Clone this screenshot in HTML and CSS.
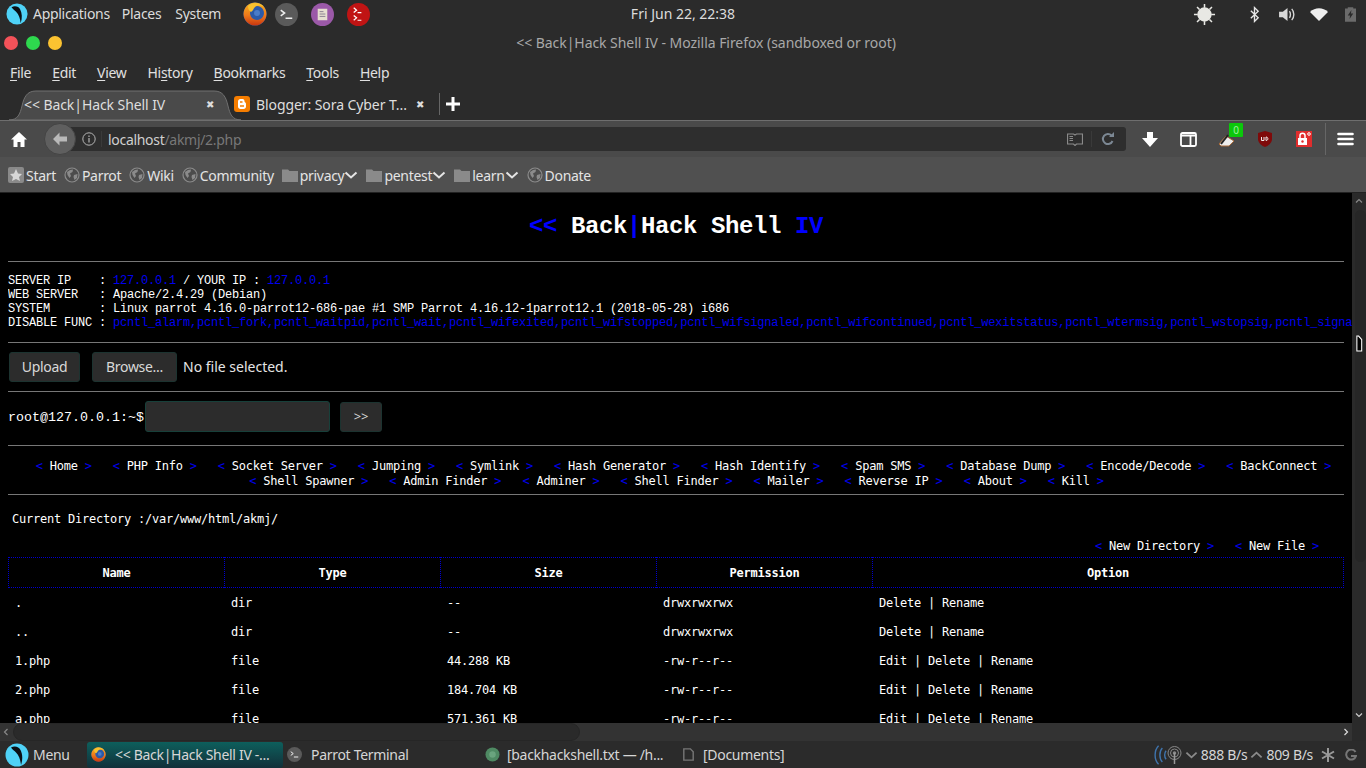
FILE: index.html
```html
<!DOCTYPE html>
<html>
<head>
    <title>Back|Hack Shell IV</title>
    <link rel="stylesheet" href="styles.css">
</head>
<body>
    <svg class="defs" width="0" height="0">
        <defs>
            <linearGradient id="fox" x1="0" y1="0" x2="0" y2="1">
                <stop offset="0" stop-color="#f7b21e"/>
                <stop offset="0.55" stop-color="#ef7a1a"/>
                <stop offset="1" stop-color="#c9360f"/>
            </linearGradient>
        </defs>
        <symbol id="parrot" viewBox="0 0 24 24">
            <circle cx="12" cy="12" r="11.5" fill="#4fd2f7"/>
            <path d="M6 4.500C10 2.500 14 4 15.500 7C17.500 11 18 16 16 22C15.500 17 14 12.500 11 9.500C9.500 8 7.500 6.500 6 4.500Z" fill="#0b0f14"/>
        </symbol>
        <symbol id="firefox" viewBox="0 0 24 24">
            <circle cx="12" cy="12" r="11.500" fill="#2c5aa8"/>
            <path fill-rule="evenodd" d="M12 .5a11.500 11.500 0 1 0 .01 0ZM14 4a7 7 0 1 1 -.01 0Z" fill="url(#fox)"/>
            <path d="M5 4C9 0 17 0 21 5C18 3 14 3 12 5C10 7 10 9 8 10C6 9 5 7 5 4Z" fill="#f9c22e"/>
            <circle cx="14" cy="11" r="3" fill="#4a7cc8"/>
        </symbol>
        <symbol id="term" viewBox="0 0 24 24">
            <circle cx="12" cy="12" r="12" fill="#5a5a5a"/>
            <path d="M6 7.500L10 10.500L6 13.500M11 16H18" fill="none" stroke="#eee" stroke-width="1.600"/>
        </symbol>
        <symbol id="globe" viewBox="0 0 16 16">
            <circle cx="8" cy="8" r="7" fill="#4c4c4c" stroke="#8b8b8b" stroke-width="1.200"/>
            <path d="M3 5L6 3L9 2.500L8.500 5L6 6.500L7 9L5.500 11L3.500 8ZM10 8L13.500 7L13 11L10.500 13L9.500 10Z" fill="#8b8b8b"/>
        </symbol>
        <symbol id="folder" viewBox="0 0 16 14">
            <path d="M0 1.500H6L7.500 3H16V14H0Z" fill="#8a8a8a"/>
        </symbol>
        <symbol id="chev" viewBox="0 0 14 8">
            <path d="M1.500 1.500L7 6.500L12.500 1.500" fill="none" stroke="currentColor" stroke-width="2"/>
        </symbol>
    </svg>

    <div class="panel">
        <div class="panel-left">
            <svg class="ico-parrot"><use href="#parrot"/></svg>
            <span class="panel-item apps">Applications</span>
            <span class="panel-item places">Places</span>
            <span class="panel-item system">System</span>
            <svg class="launch launch-ff"><use href="#firefox"/></svg>
            <svg class="launch launch-term"><use href="#term"/></svg>
            <svg class="launch launch-note" viewBox="0 0 24 24">
                <circle cx="12" cy="12" r="12" fill="#9b59a8"/>
                <path d="M7 6H17V18H7Z" fill="#e6dfd0"/>
                <path d="M9 9H13M9 11.500H15M9 14H15" stroke="#8a7f90" stroke-width="1"/>
            </svg>
            <svg class="launch launch-red" viewBox="0 0 24 24">
                <circle cx="12" cy="12" r="12" fill="#c01414"/>
                <path d="M7 5L10 7.500L7 10M11 10H15M7 13L10 15.500L7 18M11 18H15" fill="none" stroke="#fff" stroke-width="1.300"/>
            </svg>
        </div>
        <div class="clock">Fri Jun 22, 22:38</div>
        <div class="panel-right">
            <svg class="tray tray-sun" viewBox="0 0 24 24">
                <circle cx="12" cy="12" r="7.500" fill="#e8e8e4"/>
                <path d="M12 1V5M12 19V23M1 12H5M19 12H23M4.200 4.200L6.800 6.800M17.200 17.200L19.800 19.800M4.200 19.800L6.800 17.200M17.200 6.800L19.800 4.200" stroke="#e8e8e4" stroke-width="1.600"/>
            </svg>
            <svg class="tray tray-bt" viewBox="0 0 12 18">
                <path d="M2 5L10 12.500L6 16.500V1.500L10 5.500L2 13" fill="none" stroke="#e6e6e6" stroke-width="1.500"/>
            </svg>
            <svg class="tray tray-vol" viewBox="0 0 18 16">
                <path d="M0 5H4L9 1V15L4 11H0Z" fill="#d8d8d8"/>
                <path d="M11 4.500C12.500 6 12.500 10 11 11.500M13.500 2C16.500 5 16.500 11 13.500 14" fill="none" stroke="#d8d8d8" stroke-width="1.500"/>
            </svg>
            <svg class="tray tray-wifi" viewBox="0 0 18 13">
                <path d="M0 4C5 -1 13 -1 18 4L9 13Z" fill="#efefef"/>
            </svg>
            <svg class="tray tray-bat" viewBox="0 0 12 16">
                <path d="M3 0H9V1.500H12V16H0V1.500H3Z" fill="#6b6b6b"/>
                <path d="M7 3L3 9H5.500L5 13L9 7H6.500Z" fill="#2b2b2b"/>
            </svg>
        </div>
    </div>

    <div class="titlebar">
        <div class="lights">
            <span class="light light-red"></span>
            <span class="light light-green"></span>
            <span class="light light-yellow"></span>
        </div>
        <div class="title">&lt;&lt; Back|Hack Shell IV - Mozilla Firefox (sandboxed or root)</div>
    </div>

    <div class="menubar">
        <span class="menu"><u>F</u>ile</span>
        <span class="menu"><u>E</u>dit</span>
        <span class="menu"><u>V</u>iew</span>
        <span class="menu">Hi<u>s</u>tory</span>
        <span class="menu"><u>B</u>ookmarks</span>
        <span class="menu"><u>T</u>ools</span>
        <span class="menu"><u>H</u>elp</span>
    </div>

    <div class="tabbar">
        <div class="tab tab-active">
            <svg class="tab-shape" viewBox="0 0 232 30" preserveAspectRatio="none">
                <path d="M0 30C9 30 11 24 13 16C15 7 18 1 27 1H205C214 1 217 7 219 16C221 24 223 30 232 30Z" fill="#4a4a4a" stroke="#707070"/>
            </svg>
            <span class="tab-text">&lt;&lt; Back|Hack Shell IV</span>
            <span class="tab-x">✖</span>
        </div>
        <div class="tab tab-other">
            <svg class="tab-fav" viewBox="0 0 16 16">
                <rect width="16" height="16" rx="3" fill="#f57d00"/>
                <path d="M4 5.500C4 4 5 3 6.500 3H8.500C10 3 10.500 4 10.500 5.500C10.500 6.500 12 6.500 12 8V10.500C12 12 11 13 9.500 13H6.500C5 13 4 12 4 10.500Z" fill="#fff"/>
                <path d="M6 6H8.500M6 10H10" stroke="#f57d00" stroke-width="1.300"/>
            </svg>
            <span class="tab-text">Blogger: Sora Cyber T...</span>
            <span class="tab-x">✖</span>
        </div>
        <span class="tab-sep"></span>
        <svg class="tab-new" viewBox="0 0 14 14"><path d="M7 0V14M0 7H14" stroke="#fff" stroke-width="3"/></svg>
    </div>

    <div class="navbar">
        <svg class="nav-home" viewBox="0 0 16 15">
            <path d="M8 0L16 7.500H13.500V15H9.500V10H6.500V15H2.500V7.500H0Z" fill="#fff"/>
        </svg>
        <div class="urlbar">
            <div class="back-btn">
                <svg viewBox="0 0 16 14" width="16" height="14"><path d="M7.500 0.500L1 7L7.500 13.500V9.500H15V4.500H7.500Z" fill="#b9b9b9"/></svg>
            </div>
            <svg class="url-info" viewBox="0 0 14 14">
                <circle cx="7" cy="7" r="6.200" fill="none" stroke="#b5b5b5" stroke-width="1"/>
                <path d="M7 6V10.500M7 3.500V5" stroke="#b5b5b5" stroke-width="1.200"/>
            </svg>
            <span class="url-line"></span>
            <span class="url-text">localhost<span class="url-path">/akmj/2.php</span></span>
            <svg class="url-read" viewBox="0 0 16 13">
                <path d="M0.500 1H6.500L8 2L9.500 1H15.500V11H9.500L8 12.500L6.500 11H0.500Z" fill="none" stroke="#8a8a8a" stroke-width="1.200"/>
                <path d="M2.500 3.500H6M2.500 5.500H6M2.500 7.500H6" stroke="#8a8a8a"/>
            </svg>
            <span class="url-line2"></span>
            <svg class="url-reload" viewBox="0 0 14 14">
                <path d="M11.500 9A5 5 0 1 1 10.500 3.500" fill="none" stroke="#7c8894" stroke-width="2"/>
                <path d="M8 5H13V0Z" fill="#7c8894"/>
            </svg>
        </div>
        <div class="nav-tools">
            <svg class="tool-down" viewBox="0 0 16 15"><path d="M5 0H11V6H16L8 15L0 6H5Z" fill="#fff"/></svg>
            <svg class="tool-side" viewBox="0 0 17 15">
                <rect x="1" y="1" width="15" height="13" rx="1.500" fill="none" stroke="#fff" stroke-width="1.800"/>
                <path d="M1 3.500H16M10.500 3.500V14" stroke="#fff" stroke-width="1.800"/>
            </svg>
            <div class="tool-pen">
                <svg viewBox="0 0 18 14" width="18" height="14">
                    <path d="M1 11L8 3L16 8L11 13H3Z" fill="#eee" stroke="#a86a3a"/>
                    <path d="M3 11L10 2" stroke="#222" stroke-width="2"/>
                </svg>
                <span class="pen-badge">0</span>
            </div>
            <svg class="tool-ub" viewBox="0 0 14 16">
                <path d="M7 0L14 2V8C14 12 10 15 7 16C4 15 0 12 0 8V2Z" fill="#7f0a0a"/>
                <path d="M3.500 6V9.500H6V6M8 6V9.500C10.500 9.500 10.500 6 8 6Z" fill="none" stroke="#eee"/>
            </svg>
            <svg class="tool-lock" viewBox="0 0 16 16">
                <rect width="16" height="16" fill="#e02d2d"/>
                <rect x="2" y="7" width="9" height="7" fill="#fff"/>
                <path d="M4 7V4.500C4 1.500 9 1.500 9 4.500V7" fill="none" stroke="#fff" stroke-width="1.500"/>
                <circle cx="13" cy="3" r="1.300" fill="none" stroke="#fff"/>
                <circle cx="6.500" cy="10.500" r="1.200" fill="#e02d2d"/>
            </svg>
            <span class="tool-sep"></span>
            <svg class="tool-menu" viewBox="0 0 17 14"><path d="M1.500 2H15.500M1.500 7H15.500M1.500 12H15.500" stroke="#fff" stroke-width="2.600" stroke-linecap="round"/></svg>
        </div>
    </div>

    <div class="bookmarks">
        <svg class="bm-start" viewBox="0 0 16 16">
            <rect width="16" height="16" rx="2" fill="#8a8a8a"/>
            <path d="M8 2L10 6.500L14 7L11 10L12 14L8 12L4 14L5 10L2 7L6 6.500Z" fill="#d8d8d8"/>
        </svg>
        <span class="bm-label">Start</span>
        <svg class="bm-globe"><use href="#globe"/></svg>
        <span class="bm-label">Parrot</span>
        <svg class="bm-globe"><use href="#globe"/></svg>
        <span class="bm-label">Wiki</span>
        <svg class="bm-globe"><use href="#globe"/></svg>
        <span class="bm-label">Community</span>
        <svg class="bm-folder"><use href="#folder"/></svg>
        <span class="bm-label">privacy</span>
        <svg class="bm-chev"><use href="#chev"/></svg>
        <svg class="bm-folder"><use href="#folder"/></svg>
        <span class="bm-label">pentest</span>
        <svg class="bm-chev"><use href="#chev"/></svg>
        <svg class="bm-folder"><use href="#folder"/></svg>
        <span class="bm-label">learn</span>
        <svg class="bm-chev"><use href="#chev"/></svg>
        <svg class="bm-globe"><use href="#globe"/></svg>
        <span class="bm-label">Donate</span>
    </div>

    <div class="viewport">
        <div class="page">
            <h1 class="shell-title"><span class="blue">&lt;&lt;</span> Back<span class="blue">|</span>Hack Shell <span class="blue">IV</span></h1>
            <hr>
            <pre class="info">SERVER IP    : <span class="blue">127.0.0.1</span> / YOUR IP : <span class="blue">127.0.0.1</span>
WEB SERVER   : Apache/2.4.29 (Debian)
SYSTEM       : Linux parrot 4.16.0-parrot12-686-pae #1 SMP Parrot 4.16.12-1parrot12.1 (2018-05-28) i686
DISABLE FUNC : <span class="blue">pcntl_alarm,pcntl_fork,pcntl_waitpid,pcntl_wait,pcntl_wifexited,pcntl_wifstopped,pcntl_wifsignaled,pcntl_wifcontinued,pcntl_wexitstatus,pcntl_wtermsig,pcntl_wstopsig,pcntl_signal,pcntl_signal_dispatch</span></pre>
            <hr>
            <div class="upload-row">
                <button class="btn btn-upload">Upload</button>
                <button class="btn btn-browse">Browse...</button>
                <span class="no-file">No file selected.</span>
            </div>
            <hr>
            <div class="cmd-row">
                <span class="prompt">root@127.0.0.1:~$</span>
                <input class="cmd-input" type="text">
                <button class="btn btn-go">&gt;&gt;</button>
            </div>
            <hr>
            <div class="links">
                &nbsp;&nbsp;<a><b>&lt;</b> Home <b>&gt;</b></a> &nbsp;&nbsp;<a><b>&lt;</b> PHP Info <b>&gt;</b></a> &nbsp;&nbsp;<a><b>&lt;</b> Socket Server <b>&gt;</b></a> &nbsp;&nbsp;<a><b>&lt;</b> Jumping <b>&gt;</b></a> &nbsp;&nbsp;<a><b>&lt;</b> Symlink <b>&gt;</b></a> &nbsp;&nbsp;<a><b>&lt;</b> Hash Generator <b>&gt;</b></a> &nbsp;&nbsp;<a><b>&lt;</b> Hash Identify <b>&gt;</b></a> &nbsp;&nbsp;<a><b>&lt;</b> Spam SMS <b>&gt;</b></a> &nbsp;&nbsp;<a><b>&lt;</b> Database Dump <b>&gt;</b></a> &nbsp;&nbsp;<a><b>&lt;</b> Encode/Decode <b>&gt;</b></a> &nbsp;&nbsp;<a><b>&lt;</b> BackConnect <b>&gt;</b></a><br>
                <a><b>&lt;</b> Shell Spawner <b>&gt;</b></a> &nbsp;&nbsp;<a><b>&lt;</b> Admin Finder <b>&gt;</b></a> &nbsp;&nbsp;<a><b>&lt;</b> Adminer <b>&gt;</b></a> &nbsp;&nbsp;<a><b>&lt;</b> Shell Finder <b>&gt;</b></a> &nbsp;&nbsp;<a><b>&lt;</b> Mailer <b>&gt;</b></a> &nbsp;&nbsp;<a><b>&lt;</b> Reverse IP <b>&gt;</b></a> &nbsp;&nbsp;<a><b>&lt;</b> About <b>&gt;</b></a> &nbsp;&nbsp;<a><b>&lt;</b> Kill <b>&gt;</b></a>
            </div>
            <hr>
            <div class="curdir">Current Directory :/var/www/html/akmj/</div>
            <div class="new-links"><a><b>&lt;</b> New Directory <b>&gt;</b></a> &nbsp;&nbsp;<a><b>&lt;</b> New File <b>&gt;</b></a></div>
            <table class="files">
                <thead>
                    <tr><th>Name</th><th>Type</th><th>Size</th><th>Permission</th><th>Option</th></tr>
                </thead>
                <tbody>
                    <tr><td>.</td><td>dir</td><td>--</td><td>drwxrwxrwx</td><td>Delete | Rename</td></tr>
                    <tr><td>..</td><td>dir</td><td>--</td><td>drwxrwxrwx</td><td>Delete | Rename</td></tr>
                    <tr><td>1.php</td><td>file</td><td>44.288 KB</td><td>-rw-r--r--</td><td>Edit | Delete | Rename</td></tr>
                    <tr><td>2.php</td><td>file</td><td>184.704 KB</td><td>-rw-r--r--</td><td>Edit | Delete | Rename</td></tr>
                    <tr><td>a.php</td><td>file</td><td>571.361 KB</td><td>-rw-r--r--</td><td>Edit | Delete | Rename</td></tr>
                </tbody>
            </table>
        </div>
        <div class="vscroll">
            <svg class="sb-arrow" viewBox="0 0 8 6"><path d="M1 4.500L4 1.500L7 4.500" fill="none" stroke="#888" stroke-width="1.200"/></svg>
            <div class="vthumb"></div>
            <svg class="sb-arrow sb-down" viewBox="0 0 8 6"><path d="M1 1.500L4 4.500L7 1.500" fill="none" stroke="#ccc" stroke-width="1.200"/></svg>
        </div>
        <div class="hscroll">
            <svg class="sb-h" viewBox="0 0 6 8"><path d="M4.500 1L1.500 4L4.500 7" fill="none" stroke="#888" stroke-width="1.200"/></svg>
            <div class="hthumb"></div>
            <svg class="sb-h" viewBox="0 0 6 8"><path d="M1.500 1L4.500 4L1.500 7" fill="none" stroke="#ddd" stroke-width="1.200"/></svg>
        </div>
        <svg class="cursor" viewBox="0 0 8 19"><path d="M1 1H3L6.500 5V18H1Z" fill="#000" stroke="#fff" stroke-width="1.200"/></svg>
    </div>

    <div class="taskbar">
        <svg class="task-logo"><use href="#parrot"/></svg>
        <span class="task-menu">Menu</span>
        <div class="task-item task-active">
            <svg class="task-ico"><use href="#firefox"/></svg>
            <span>&lt;&lt; Back|Hack Shell IV -...</span>
        </div>
        <div class="task-item task-term">
            <svg class="task-ico"><use href="#term"/></svg>
            <span>Parrot Terminal</span>
        </div>
        <div class="task-item task-txt">
            <svg class="task-ico" viewBox="0 0 16 16"><circle cx="8" cy="8" r="7.500" fill="#4f8a63"/><circle cx="8" cy="8" r="3.500" fill="#6aa47e"/></svg>
            <span>[backhackshell.txt — /h...</span>
        </div>
        <div class="task-item task-doc">
            <svg class="task-ico" viewBox="0 0 16 16"><path d="M3 2H10L13 5V14H3Z" fill="none" stroke="#777" stroke-width="1.500"/></svg>
            <span>[Documents]</span>
        </div>
        <div class="net">
            <svg class="net-waves" viewBox="0 0 15 22"><path d="M6 1C1 6 1 16 6 21M10 3.500C6.500 7 6.500 15 10 18.500M14 6.500C12 9 12 13 14 15.500" fill="none" stroke="#3f74ad" stroke-width="1.500"/></svg>
            <svg class="net-ant" viewBox="0 0 15 18">
                <circle cx="7.500" cy="7" r="6.500" fill="none" stroke="#888"/>
                <circle cx="7.500" cy="7" r="4" fill="none" stroke="#888"/>
                <circle cx="7.500" cy="7" r="1.800" fill="#888"/>
                <path d="M7.500 7V18" stroke="#999" stroke-width="1.500"/>
            </svg>
            <svg class="net-chev"><use href="#chev"/></svg>
            <span class="net-val">888 B/s</span>
            <svg class="net-chev net-up"><use href="#chev"/></svg>
            <span class="net-val">809 B/s</span>
            <svg class="net-star" viewBox="0 0 14 14"><path d="M7 0V14M1 3.500L13 10.500M13 3.500L1 10.500" stroke="#999" stroke-width="2"/></svg>
            <svg class="net-g" viewBox="0 0 12 12"><path d="M10.500 3A5 5 0 1 0 11 7H6" fill="none" stroke="#777" stroke-width="2"/></svg>
        </div>
    </div>
</body>
</html>
```

FILE: styles.css
```css
html, body {
    margin: 0;
    padding: 0;
    height: 100%;
    overflow: hidden;
}

body {
    display: flex;
    flex-direction: column;
    background: #2b2b2b;
    color: #e4e4e4;
    font-family: "Noto Sans", sans-serif;
    font-size: 14px;
    letter-spacing: -0.3px;
}

.defs {
    position: absolute;
}

/* top gnome panel */
.panel {
    height: 28px;
    flex: none;
    display: flex;
    align-items: center;
    justify-content: space-between;
    background: #2b2b2b;
    color: #dcdcdc;
}

.panel-left {
    display: flex;
    align-items: center;
    width: 500px;
}

.panel-item { padding-bottom: 2px; }

.ico-parrot {
    width: 22px;
    height: 22px;
    margin-left: 6px;
}

.apps { margin-left: 5px; }
.places { margin-left: 12px; }
.system { margin-left: 14px; }

.launch {
    width: 23px;
    height: 23px;
    flex: none;
}

.launch-ff { margin-left: 22px; width: 24px; height: 24px; }
.launch-term { margin-left: 8px; }
.launch-note { margin-left: 13px; }
.launch-red { margin-left: 13px; }

.clock {
    position: absolute;
    left: 0;
    width: 1366px;
    text-align: center;
    pointer-events: none;
    letter-spacing: 0;
    padding-bottom: 2px;
}

.panel-right {
    display: flex;
    align-items: center;
}

.tray { flex: none; }
.tray-sun { width: 23px; height: 23px; margin-right: 33px; }
.tray-bt { width: 11px; height: 17px; margin-right: 19px; }
.tray-vol { width: 17px; height: 15px; margin-right: 14px; }
.tray-wifi { width: 18px; height: 13px; margin-right: 17px; }
.tray-bat { width: 11px; height: 15px; margin-right: 10px; }

/* window title */
.titlebar {
    height: 30px;
    flex: none;
    display: flex;
    align-items: center;
}

.lights {
    display: flex;
    gap: 8px;
    padding-left: 4px;
    margin-right: -16px;
    box-sizing: border-box;
    width: 62px;
}

.light {
    width: 14px;
    height: 14px;
    border-radius: 50%;
}

.light-red { background: #f45259; }
.light-green { background: #2ed84e; }
.light-yellow { background: #fcc331; }

.title {
    flex: 1;
    text-align: center;
    color: #a8a8a8;
    letter-spacing: -0.05px;
    padding-bottom: 2px;
}

/* menu bar */
.menubar {
    height: 30px;
    flex: none;
    display: flex;
    align-items: center;
    gap: 21px;
    padding-left: 10px;
    padding-bottom: 2px;
    box-sizing: border-box;
    color: #e0e0e0;
}

.menu u { text-underline-offset: 2px; }

/* tabs */
.tabbar {
    height: 32px;
    flex: none;
    display: flex;
    align-items: center;
    background: #2b2b2b;
    padding-left: 9px;
    box-sizing: border-box;
}

.tab {
    position: relative;
    height: 32px;
    display: flex;
    align-items: center;
    color: #dedede;
}

.tab-active {
    width: 223px;
    padding-left: 15px;
    box-sizing: border-box;
}

.tab-shape {
    position: absolute;
    left: 0;
    top: 2px;
    width: 232px;
    height: 30px;
}

.tab-text {
    position: relative;
    padding-top: 1px;
    letter-spacing: -0.08px;
}

.tab-x {
    position: absolute;
    font-size: 10px;
    color: #ddd;
}

.tab-active .tab-x { left: 197px; }

.tab-other {
    width: 206px;
    padding-left: 2px;
    box-sizing: border-box;
}

.tab-other .tab-x { left: 184px; }

.tab-fav {
    width: 16px;
    height: 16px;
    margin-right: 6px;
    flex: none;
}

.tab-sep {
    width: 1px;
    height: 22px;
    background: #666;
    margin-left: 1px;
}

.tab-new {
    width: 14px;
    height: 14px;
    margin-left: 6px;
}

/* nav toolbar */
.navbar {
    height: 37px;
    flex: none;
    display: flex;
    align-items: center;
    background: #4a4a4a;
    border-top: 1px solid #6e6e6e;
    box-sizing: border-box;
}

.nav-home {
    width: 16px;
    height: 15px;
    margin-left: 11px;
    flex: none;
}

.urlbar {
    width: 1066px;
    height: 24px;
    margin-left: 33px;
    flex: none;
    display: flex;
    align-items: center;
    position: relative;
    background: #2e2e2e;
    border-radius: 3px;
}

.back-btn {
    position: absolute;
    left: -16px;
    top: -4px;
    width: 30px;
    height: 30px;
    border-radius: 50%;
    background: #5f5f5f;
    border: 1px solid #444;
    display: flex;
    align-items: center;
    justify-content: center;
}

.url-info {
    width: 14px;
    height: 14px;
    margin-left: 22px;
    flex: none;
}

.url-line {
    width: 1px;
    height: 16px;
    background: #3a3a3a;
    margin-left: 5px;
}

.url-text {
    margin-left: 6px;
    flex: 1;
    color: #d0d0d0;
}

.url-path { color: #787878; }

.url-read {
    width: 16px;
    height: 13px;
    flex: none;
}

.url-line2 {
    width: 1px;
    height: 16px;
    background: #3a3a3a;
    margin-left: 8px;
}

.url-reload {
    width: 14px;
    height: 14px;
    margin-left: 9px;
    margin-right: 11px;
    flex: none;
}

.nav-tools {
    display: flex;
    align-items: center;
    margin-left: 16px;
}

.tool-down { width: 16px; height: 15px; }
.tool-side { width: 17px; height: 15px; margin-left: 22px; }

.tool-pen {
    position: relative;
    width: 18px;
    height: 14px;
    margin-left: 21px;
}

.pen-badge {
    position: absolute;
    left: 11px;
    top: -9px;
    width: 14px;
    height: 14px;
    background: #0bc80b;
    border-radius: 1px;
    color: #9ff09f;
    font-size: 10px;
    line-height: 14px;
    text-align: center;
}

.tool-ub { width: 14px; height: 16px; margin-left: 22px; }
.tool-lock { width: 16px; height: 16px; margin-left: 24px; }

.tool-sep {
    width: 1px;
    height: 32px;
    background: #666;
    margin-left: 13px;
}

.tool-menu { width: 17px; height: 14px; margin-left: 11px; }

/* bookmarks toolbar */
.bookmarks {
    height: 36px;
    flex: none;
    display: flex;
    align-items: center;
    background: #505050;
    border-bottom: 1px solid #222;
    box-sizing: border-box;
    padding-left: 8px;
    padding-top: 1px;
    color: #e4e4e4;
}

.bm-start { width: 16px; height: 16px; flex: none; }
.bm-globe { width: 16px; height: 16px; flex: none; margin-left: 8px; }
.bm-folder { width: 16px; height: 14px; flex: none; margin-left: 8px; }
.bm-label { margin-left: 2px; }
.bm-chev { width: 14px; height: 8px; color: #e4e4e4; flex: none; }

/* browser content */
.viewport {
    flex: 1;
    min-height: 0;
    position: relative;
    display: grid;
    grid-template-columns: 1352px 14px;
    grid-template-rows: 530px 18px;
    background: #000;
}

.page {
    overflow: hidden;
    padding: 0 8px;
    color: #fff;
    font-family: "DejaVu Sans Mono", monospace;
    font-size: 12px;
    letter-spacing: -0.224px;
}

.page hr {
    border: none;
    height: 1px;
    background: #777;
    margin: 0;
    width: 1336px;
}

.blue { color: #0000ee; }

.shell-title {
    height: 68px;
    margin: 0;
    text-align: center;
    font-family: "Liberation Mono", monospace;
    font-size: 24px;
    letter-spacing: -0.4px;
    line-height: 67px;
}

.shell-title .blue { color: #00f; }

.info {
    margin: 12px 0 12px;
    font-family: "Liberation Mono", monospace;
    font-size: 12px;
    letter-spacing: -0.2px;
    line-height: 14px;
    width: 1400px;
    overflow: hidden;
}

.upload-row {
    display: flex;
    align-items: center;
    height: 30px;
    padding: 9px 0 9px 1px;
}

.btn {
    background: #2c2c2c;
    border: 1px solid #1c3330;
    border-radius: 3px;
    color: #d8d8d8;
    font-family: "Noto Sans", sans-serif;
    font-size: 14px;
    letter-spacing: -0.3px;
    padding: 0 0 2px;
    height: 30px;
    box-sizing: border-box;
}

.btn-upload { width: 71px; }
.btn-browse { width: 85px; margin-left: 12px; }

.no-file {
    margin-left: 6px;
    padding-bottom: 2px;
    font-family: "Noto Sans", sans-serif;
    font-size: 14px;
    letter-spacing: 0;
    color: #e4e4e4;
}

.cmd-row {
    display: flex;
    align-items: center;
    height: 31px;
    padding: 9px 0 13px;
}

.prompt {
    width: 137px;
    flex: none;
    padding-top: 2px;
    font-family: "Liberation Mono", monospace;
    font-size: 13.33px;
    letter-spacing: 0;
}

.cmd-input {
    width: 185px;
    height: 31px;
    box-sizing: border-box;
    background: #2c2c2c;
    border: 1px solid #17403a;
    border-radius: 3px;
    padding: 0;
    flex: none;
}

.btn-go {
    width: 42px;
    margin-left: 10px;
    font-size: 13px;
}

.links {
    padding: 13px 0 5px 1px;
    text-align: center;
    line-height: 15px;
    width: 1335px;
}

.links b, .new-links b {
    font-weight: normal;
    color: #0000ee;
}

.curdir {
    padding: 17px 0 0 4px;
    line-height: 15px;
}

.new-links {
    text-align: right;
    padding: 12px 25px 0 0;
    line-height: 15px;
    width: 1311px;
    height: 15px;
}

.files {
    margin-top: 3px;
    border-collapse: separate;
    border-spacing: 0;
    table-layout: fixed;
    width: 1336px;
}

.files th {
    width: 216px;
    height: 31px;
    padding: 0;
    border-top: 1px dotted #0000cc;
    border-bottom: 1px dotted #0000cc;
    border-left: 1px dotted #0000cc;
    box-sizing: border-box;
}

.files th:last-child {
    width: auto;
    border-right: 1px dotted #0000cc;
}

.files td {
    height: 29px;
    padding: 0 7px;
}

/* scrollbars */
.vscroll {
    grid-row: 1 / 3;
    grid-column: 2;
    background: #2a2a2a;
    display: flex;
    flex-direction: column;
    align-items: center;
    position: relative;
    padding-top: 5px;
    box-sizing: border-box;
}

.sb-arrow {
    width: 8px;
    height: 6px;
    flex: none;
}

.vthumb {
    width: 11px;
    height: 352px;
    margin-top: 6px;
    margin-left: 3px;
    background: #262626;
    border-radius: 6px;
}

.sb-down {
    margin-top: 150px;
}

.hscroll {
    grid-row: 2;
    grid-column: 1;
    background: #333;
    display: flex;
    align-items: center;
    justify-content: space-between;
    padding: 0 3px;
    position: relative;
}

.sb-h {
    width: 6px;
    height: 8px;
    flex: none;
}

.hthumb {
    position: absolute;
    left: 13px;
    top: 0;
    width: 567px;
    height: 18px;
    background: #2a2a2a;
    border-radius: 9px;
    border: 1px solid #262626;
    box-sizing: border-box;
}

.cursor {
    position: absolute;
    left: 1356px;
    top: 141px;
    width: 7px;
    height: 19px;
}

/* bottom panel */
.taskbar {
    height: 27px;
    flex: none;
    display: flex;
    align-items: center;
    background: #2b2b2b;
    color: #d6d6d6;
    position: relative;
}

.task-logo {
    width: 24px;
    height: 24px;
    margin-left: 5px;
    flex: none;
}

.task-menu {
    margin-left: 4px;
    width: 54px;
}

.task-item {
    height: 26px;
    display: flex;
    align-items: center;
    box-sizing: border-box;
    white-space: nowrap;
}

.task-ico {
    width: 15px;
    height: 15px;
    flex: none;
}

.task-active {
    width: 196px;
    background: linear-gradient(#0d5f5c, #12303a);
    border-radius: 3px;
    margin-right: 4px;
}

.task-active .task-ico { margin: 0 9px 0 4px; }

.task-term {
    width: 196px;
}

.task-term .task-ico { margin-right: 9px; }

.task-txt {
    width: 196px;
    margin-left: 2px;
}

.task-txt .task-ico { margin-right: 7px; }

.task-doc .task-ico { margin-right: 7px; }

.net {
    position: absolute;
    right: 9px;
    top: 0;
    height: 27px;
    display: flex;
    align-items: center;
}

.net-waves { width: 14px; height: 22px; }
.net-ant { width: 15px; height: 18px; }
.net-chev { width: 13px; height: 8px; color: #8a8a8a; margin: 0 3px; }
.net-up { transform: scaleY(-1); }
.net-star { width: 14px; height: 14px; margin-left: 8px; }
.net-g { width: 12px; height: 12px; margin-left: 10px; }
```
